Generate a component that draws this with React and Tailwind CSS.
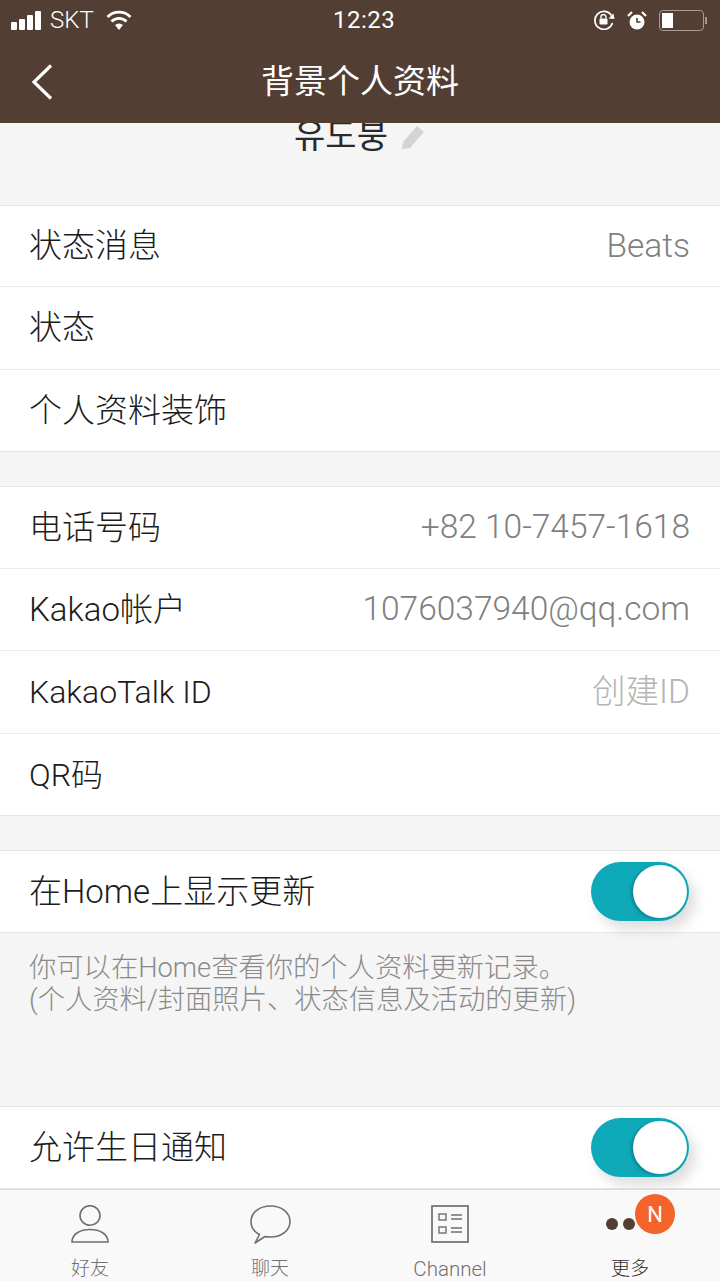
import React from 'react';

const font = 'font-["Roboto","Noto_Sans_CJK_SC",sans-serif]';

const Row = ({ label, value, valueClass = 'text-[#808080]', labelClass = 'text-[33px]', h = 'h-[82px]', last }) => (
  <div className={`${h} flex items-center justify-between pl-[29px] pr-[30px] ${last ? '' : 'border-b border-[#ececec]'}`}>
    <span className={`${labelClass} text-[#1c1c1c] font-light`}>{label}</span>
    {value && <span className={`text-[33.500px] font-light ${valueClass}`}>{value}</span>}
  </div>
);

const Toggle = () => (
  <div className="w-[98px] h-[59px] rounded-full bg-[#0ea9b9] relative shadow-[6px_8px_14px_rgba(0,0,0,0.14)]">
    <div className="absolute right-[2px] top-[3px] w-[54px] h-[53px] rounded-full bg-white shadow-[-2px_1px_3px_rgba(0,60,70,0.35)]" />
  </div>
);

const ToggleRow = ({ label }) => (
  <div className="h-[81px] flex items-center justify-between pl-[29px] pr-[31px] bg-white border-t border-b border-[#e6e6e6] box-content">
    <span className="text-[33px] text-[#1c1c1c] font-light">{label}</span>
    <Toggle />
  </div>
);

const StatusBar = () => (
  <div className="h-[40px] flex items-center justify-between pl-[11px] pr-[13px] text-white relative">
    <div className="flex items-center">
      <div className="flex items-end gap-[2px] h-[19px]">
        <div className="w-[6px] h-[8px] bg-white rounded-[1px]" />
        <div className="w-[6px] h-[11px] bg-white rounded-[1px]" />
        <div className="w-[6px] h-[15px] bg-white rounded-[1px]" />
        <div className="w-[6px] h-[19px] bg-white rounded-[1px]" />
      </div>
      <span className="text-[24px] leading-none font-light ml-[9px]">SKT</span>
      <svg width="26" height="21" viewBox="0 0 26 21" className="ml-[12px]">
        <path d="M1.500 7a16 16 0 0 1 23 0" fill="none" stroke="white" strokeWidth="2.800" />
        <path d="M5.500 11.500a10.500 10.500 0 0 1 15 0" fill="none" stroke="white" strokeWidth="2.800" />
        <path d="M9 15a6 6 0 0 1 8 0l-4 5z" fill="white" />
      </svg>
    </div>
    <span className="absolute left-[333px] top-[3px] text-[24px] tracking-[0.5px] leading-[34px]">12:23</span>
    <div className="flex items-center">
      <svg width="22" height="20" viewBox="0 0 22 20" className="mr-[12px]">
        <path d="M18.500 5.500A9 9 0 1 0 19.500 13" fill="none" stroke="white" strokeWidth="1.700" />
        <path d="M15.500 8.500l6 .5-1-5.500z" fill="white" />
        <rect x="6.500" y="8.500" width="8" height="6" rx="1" fill="white" />
        <path d="M8 8.500V7a2.500 2.500 0 0 1 5 0v1.500" fill="none" stroke="white" strokeWidth="1.400" />
      </svg>
      <svg width="20" height="19" viewBox="0 0 20 19" className="mr-[12px]">
        <circle cx="10" cy="11" r="7.500" fill="white" />
        <path d="M10 7v4h3.500" fill="none" stroke="#523e33" strokeWidth="1.600" />
        <path d="M1 5l4-4M19 5l-4-4" stroke="white" strokeWidth="2.200" />
      </svg>
      <div className="w-[45px] h-[21px] border-[1.500px] border-[#a89a90] rounded-[4px] p-[2px]">
        <div className="w-[11px] h-full bg-white" />
      </div>
      <div className="w-[2px] h-[7px] bg-[#a89a90] ml-[1px]" />
    </div>
  </div>
);

const Header = () => (
  <div className="h-[123px] bg-[#523e33] shrink-0">
    <StatusBar />
    <div className="h-[83px] flex items-center relative">
      <svg width="22" height="36" viewBox="0 0 22 36" className="ml-[31px]">
        <path d="M20 1.500 L3 18 L20 34.500" fill="none" stroke="white" strokeWidth="3.200" />
      </svg>
      <span className="absolute inset-x-0 text-center text-[33px] text-white">背景个人资料</span>
    </div>
  </div>
);

const Tab = ({ label, active, labelClass = 'text-[19px]', children }) => (
  <div className="flex-1 flex flex-col items-center">
    <div className="h-[38px] mt-[15px] flex items-center justify-center relative">{children}</div>
    <span className={`${labelClass} leading-[22px] mt-[15px] font-light ${active ? 'text-[#2c2c2c]' : 'text-[#707070]'}`}>{label}</span>
  </div>
);

const TabBar = () => (
  <div className="h-[92px] bg-[#f9f9f9] border-t border-[#dcdcdc] flex shrink-0">
    <Tab label="好友">
      <svg width="38" height="38" viewBox="0 0 38 38">
        <ellipse cx="19" cy="10.500" rx="10" ry="9.800" fill="none" stroke="#6f6f6f" strokeWidth="1.600" />
        <path d="M1 37c0-8 8-12.500 18-12.500S37 29 37 37z" fill="none" stroke="#6f6f6f" strokeWidth="1.600" />
      </svg>
    </Tab>
    <Tab label="聊天">
      <svg width="41" height="39" viewBox="0 0 41 39">
        <path d="M20.500 1C9.500 1 1 7.500 1 16.500c0 6 3.500 10.500 8.500 13L5 38l10-6.500c1.800.4 3.600.5 5.500.5C31.500 32 40 25.500 40 16.500S31.500 1 20.500 1z" fill="none" stroke="#6f6f6f" strokeWidth="1.600" strokeLinejoin="round" />
      </svg>
    </Tab>
    <Tab label="Channel" labelClass="text-[20.500px]">
      <svg width="38" height="38" viewBox="0 0 38 38">
        <rect x="1" y="1" width="36" height="36" fill="none" stroke="#6f6f6f" strokeWidth="1.700" />
        <rect x="8" y="9" width="7" height="6" fill="none" stroke="#6f6f6f" strokeWidth="1.400" />
        <rect x="8" y="22" width="7" height="6" fill="none" stroke="#6f6f6f" strokeWidth="1.400" />
        <path d="M20 10h11M20 14h11M20 23h11M20 27h11" stroke="#6f6f6f" strokeWidth="1.400" />
      </svg>
    </Tab>
    <Tab label="更多" active>
      <div className="w-[70px] h-full pl-[11px] flex gap-[5px] items-center">
        <div className="w-[12px] h-[12px] rounded-full bg-[#523e33]" />
        <div className="w-[12px] h-[12px] rounded-full bg-[#523e33]" />
      </div>
      <div className="absolute left-[40px] top-[-11px] w-[40px] h-[40px] rounded-full bg-[#f4642a] text-white text-[22px] flex items-center justify-center">N</div>
    </Tab>
  </div>
);

export default function App() {
  return (
    <div className={`w-[720px] h-[1281px] flex flex-col overflow-hidden bg-[#f5f5f5] ${font}`}>
      <Header />
      <div className="flex-1 overflow-hidden">
        <div className="h-[82px] flex justify-center overflow-hidden">
          <div className="flex items-start -mt-[12px] h-[50px] gap-[13px]">
            <span className="text-[34px] leading-[46px] text-[#2a2a2a]" style={{ fontFamily: '"Noto Sans CJK KR"' }}>유도붕</span>
            <svg width="25" height="26" viewBox="0 0 25 26" className="mt-[13px]">
              <path d="M1 25l1-7L16 2l7 6L9 24z" fill="#d4d4d4" />
            </svg>
          </div>
        </div>
        <div className="bg-white border-t border-b border-[#e6e6e6]">
          <Row label="状态消息" value="Beats" h="h-[81px]" />
          <Row label="状态" h="h-[83px]" />
          <Row label="个人资料装饰" h="h-[81px]" last />
        </div>
        <div className="h-[34px]" />
        <div className="bg-white border-t border-b border-[#e6e6e6]">
          <Row label="电话号码" value="+82 10-7457-1618" />
          <Row label="Kakao帐户" value="1076037940@qq.com" />
          <Row label="KakaoTalk ID" labelClass="text-[32px]" value="创建ID" valueClass="text-[#b5b5b5]" h="h-[83px]" />
          <Row label="QR码" labelClass="text-[32px]" h="h-[81px]" last />
        </div>
        <div className="h-[34px]" />
        <ToggleRow label="在Home上显示更新" />
        <div className="h-[173px] pl-[29px] pt-[19px] text-[27.300px] leading-[32px] font-light text-[#8a8a8a]">
          <p>你可以在Home查看你的个人资料更新记录。</p>
          <p>(个人资料/封面照片、状态信息及活动的更新)</p>
        </div>
        <ToggleRow label="允许生日通知" />
      </div>
      <TabBar />
    </div>
  );
}
